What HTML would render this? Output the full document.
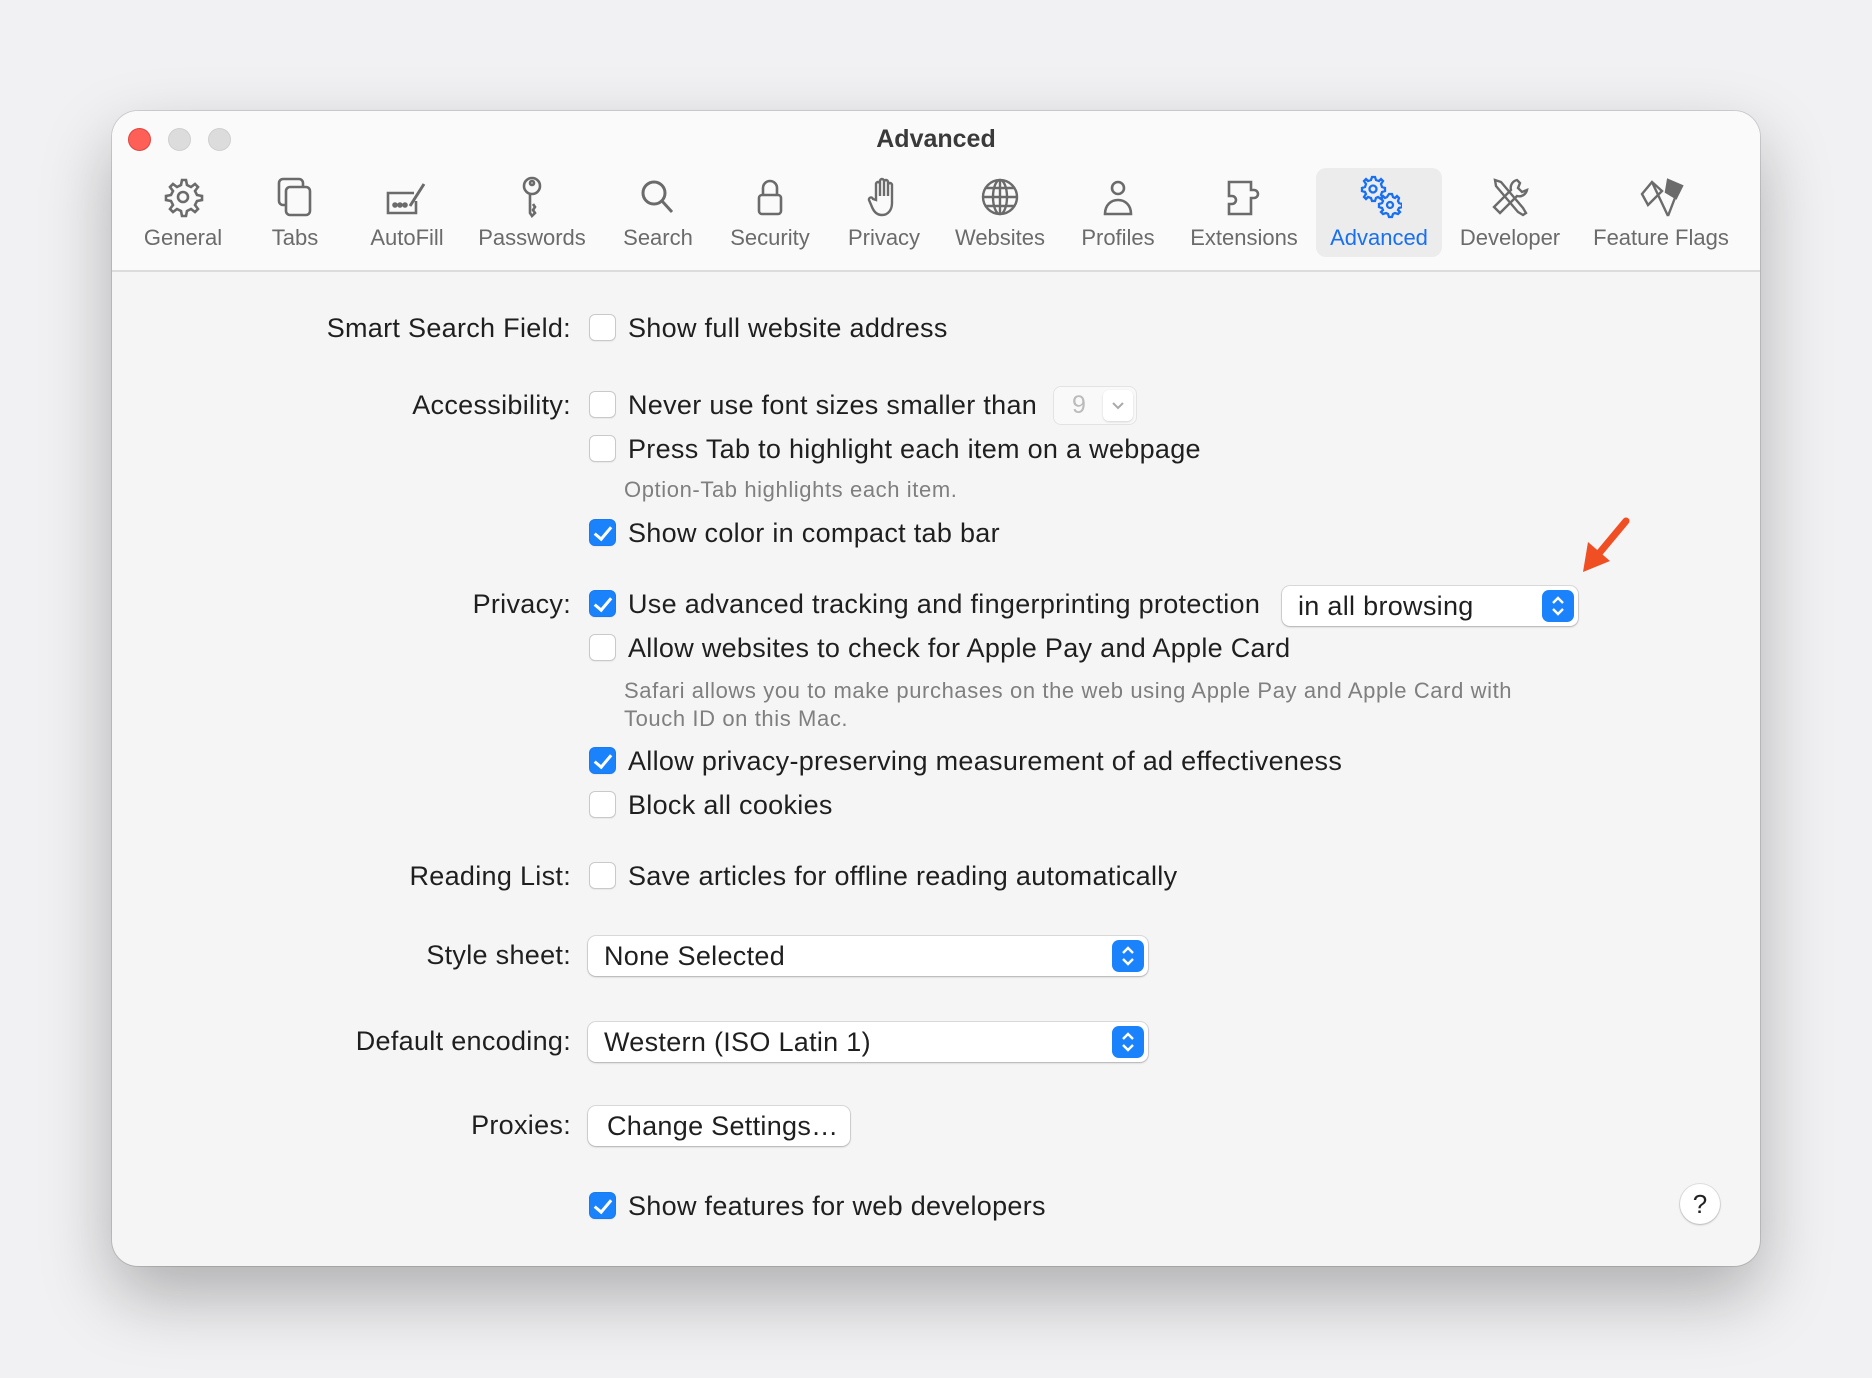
<!DOCTYPE html>
<html><head><meta charset="utf-8"><style>
*{box-sizing:border-box;margin:0;padding:0}
body{width:1872px;height:1378px;background:#f1f1f3;font-family:"Liberation Sans",sans-serif;position:relative;overflow:hidden}
.win{position:absolute;left:112px;top:111px;width:1648px;height:1155px;border-radius:26px;background:#f5f5f5;box-shadow:0 30px 70px rgba(0,0,0,.28),0 0 0 1px rgba(0,0,0,.12);overflow:hidden}
.tb{position:absolute;left:0;top:0;width:100%;height:161px;background:#fafafa;border-bottom:2px solid #dcdcdc}
.tl{position:absolute;top:17px;width:23px;height:23px;border-radius:50%;background:#dcdcdc;border:1px solid #cfcfcf}
.title{position:absolute;top:14px;left:0;width:100%;text-align:center;font-weight:bold;font-size:25px;color:#3a3a3a}
.tab{position:absolute;top:63px;width:130px;margin-left:-65px;text-align:center;color:#6b6b6b;font-size:22px;white-space:nowrap}
.tab svg{display:block;margin:0 auto 5px;width:46px;height:46px}
.tab span{display:block;line-height:26px}
.sel{position:absolute;left:1204px;top:57px;width:126px;height:89px;background:#ececec;border-radius:10px}
.t{position:absolute;font-size:27px;letter-spacing:.3px;color:#1f1f1f;line-height:40px;white-space:nowrap}
.lbl{right:1189px;text-align:right}
.note{position:absolute;font-size:22px;letter-spacing:.6px;color:#7f7f7f;line-height:28px;left:512px;white-space:nowrap}
.cb{position:absolute;left:477px;width:27px;height:27px;border-radius:6px;background:#fff;border:1px solid #c9c9c9;box-shadow:0 1px 1px rgba(0,0,0,.05)}
.cb.on{background:#1a82fb;border-color:#1a7af0}
.cb.on:after{content:"";position:absolute;left:8px;top:3px;width:7px;height:14px;border:solid #fff;border-width:0 3.5px 3.5px 0;transform:rotate(40deg)}
.pop{position:absolute;background:#fff;border-radius:8px;box-shadow:0 0 0 1px rgba(0,0,0,.1),0 1px 2px rgba(0,0,0,.2);font-size:27px;letter-spacing:.3px;color:#1f1f1f;line-height:40px;padding-left:16px;white-space:nowrap}
.arr{position:absolute;right:4px;top:4px;width:32px;height:32px;border-radius:7px;background:#1a82fb}
</style></head><body>
<div class="win">
<div class="tb">
<div class="tl" style="left:16px;background:#fe5f57;border-color:#e0443e"></div>
<div class="tl" style="left:56px"></div>
<div class="tl" style="left:96px"></div>
<div class="title">Advanced</div>
<div class="sel"></div>
<div class="tab" style="left:71px"><svg viewBox="0 0 46 46" fill="none" stroke="#6b6b6b" stroke-width="2.6"><path d="M23 6l3 0 1 5 4 2 4-3 3 3-3 4 2 4 5 1v4l-5 1-2 4 3 4-3 3-4-3-4 2-1 5h-4l-1-5-4-2-4 3-3-3 3-4-2-4-5-1v-4l5-1 2-4-3-4 3-3 4 3 4-2 1-5z"/><circle cx="23" cy="23" r="5"/></svg><span>General</span></div>
<div class="tab" style="left:183px"><svg viewBox="0 0 46 46" fill="none" stroke="#6b6b6b" stroke-width="2.6"><rect x="7" y="5" width="24" height="26" rx="4"/><rect x="14" y="13" width="24" height="28" rx="4" fill="#fafafa"/></svg><span>Tabs</span></div>
<div class="tab" style="left:295px"><svg viewBox="0 0 46 46" fill="none" stroke="#6b6b6b" stroke-width="2.6"><path d="M30 19H4v20h28V27"/><path d="M26 32l14-22" stroke-width="3"/><circle cx="11" cy="31" r="1.5" fill="#6b6b6b"/><circle cx="16" cy="31" r="1.5" fill="#6b6b6b"/><circle cx="21" cy="31" r="1.5" fill="#6b6b6b"/></svg><span>AutoFill</span></div>
<div class="tab" style="left:420px"><svg viewBox="0 0 46 46" fill="none" stroke="#6b6b6b" stroke-width="2.6"><circle cx="23" cy="12" r="8"/><circle cx="23" cy="9" r="2"/><path d="M21 20v19l2 3 3-3-2-3 2-3-2-3"/></svg><span>Passwords</span></div>
<div class="tab" style="left:546px"><svg viewBox="0 0 46 46" fill="none" stroke="#6b6b6b" stroke-width="3"><circle cx="19" cy="19" r="11"/><path d="M27 27l10 11"/></svg><span>Search</span></div>
<div class="tab" style="left:658px"><svg viewBox="0 0 46 46" fill="none" stroke="#6b6b6b" stroke-width="2.6"><rect x="12" y="21" width="22" height="19" rx="3"/><path d="M16 21v-7a7 7 0 0 1 14 0v7"/></svg><span>Security</span></div>
<div class="tab" style="left:772px"><svg viewBox="0 0 46 46" fill="none" stroke="#6b6b6b" stroke-width="2.4"><path d="M15 26V10a2 2 0 0 1 4 0v12V7a2 2 0 0 1 4 0v15V8a2 2 0 0 1 4 0v14V11a2 2 0 0 1 4 0v18c0 7-4 12-10 12-5 0-8-3-10-8l-3-7a2 2 0 0 1 4-1z"/></svg><span>Privacy</span></div>
<div class="tab" style="left:888px"><svg viewBox="0 0 46 46" fill="none" stroke="#6b6b6b" stroke-width="2.4"><circle cx="23" cy="23" r="17"/><ellipse cx="23" cy="23" rx="7" ry="17"/><path d="M6 23h34M9 14h28M9 32h28M23 6v34"/></svg><span>Websites</span></div>
<div class="tab" style="left:1006px"><svg viewBox="0 0 46 46" fill="none" stroke="#6b6b6b" stroke-width="2.6"><circle cx="23" cy="14" r="6"/><path d="M10 40c0-9 6-14 13-14s13 5 13 14z"/></svg><span>Profiles</span></div>
<div class="tab" style="left:1132px"><svg viewBox="0 0 46 46" fill="none" stroke="#6b6b6b" stroke-width="2.6"><path d="M8 8h22v8h3a4 4 0 0 1 0 8h-3v16H8V30h3a4 4 0 0 0 0-8H8z"/></svg><span>Extensions</span></div>
<div class="tab" style="left:1267px;color:#1870f0"><svg viewBox="0 0 46 46" fill="none" stroke="#1870f0" stroke-width="2.3"><path d="M16 3h3l1 3 3 1 2-2 2 2-2 3 1 3 3 1v3l-3 1-1 3 2 2-2 2-3-2-2 1-1 3h-3l-1-3-3-1-2 2-2-2 2-3-1-2-3-1v-3l3-1 1-3-2-3 2-2 2 2 3-1z"/><circle cx="17" cy="15" r="3.5"/><path d="M33 20h3l1 3 2 1 2-2 2 2-1 3 1 2 3 1v3l-3 1-1 2 2 2-2 2-3-1-2 1-1 3h-3l-1-3-2-1-3 1-2-2 2-2-1-2-3-1v-3l3-1 1-2-2-3 2-2 2 2 2-1z"/><circle cx="34" cy="31" r="3"/></svg><span>Advanced</span></div>
<div class="tab" style="left:1398px"><svg viewBox="0 0 46 46" fill="none" stroke="#6b6b6b" stroke-width="2.4"><path d="M8 6l6 2 22 26 3 5-3 2-5-3L9 12z"/><path d="M30 6a8 8 0 0 0-6 10L7 33l6 6 17-17a8 8 0 0 0 10-6l-5 2-4-4 2-5z"/></svg><span>Developer</span></div>
<div class="tab" style="left:1549px;width:150px;margin-left:-75px"><svg viewBox="0 0 46 46" fill="none" stroke="#6b6b6b" stroke-width="2.4" style="width:60px"><path d="M4 20l10-12 10 9-8 8-6 6z"/><path d="M14 8l16 34M30 42l10-26"/><path d="M30 6l14 6-6 12-10-6z" fill="#6b6b6b"/></svg><span>Feature Flags</span></div>
</div>

<div class="t lbl" style="top:197px">Smart Search Field:</div>
<div class="cb" style="top:203px"></div><div class="t" style="left:516px;top:197px">Show full website address</div>

<div class="t lbl" style="top:274px">Accessibility:</div>
<div class="cb" style="top:280px"></div><div class="t" style="left:516px;top:274px">Never use font sizes smaller than</div>
<div style="position:absolute;left:942px;top:276px;width:82px;height:37px;border-radius:7px;background:#f9f9f9;box-shadow:0 0 0 1px rgba(0,0,0,.07)"><span style="position:absolute;left:18px;top:4px;font-size:25px;color:#bbb">9</span><span style="position:absolute;right:3px;top:3px;width:30px;height:31px;background:#fff;border-radius:6px;box-shadow:0 1px 2px rgba(0,0,0,.15)"><svg width="30" height="31" viewBox="0 0 30 31"><path d="M10 13l5 5 5-5" fill="none" stroke="#aaa" stroke-width="2"/></svg></span></div>
<div class="cb" style="top:324px"></div><div class="t" style="left:516px;top:318px">Press Tab to highlight each item on a webpage</div>
<div class="note" style="top:365px">Option-Tab highlights each item.</div>
<div class="cb on" style="top:408px"></div><div class="t" style="left:516px;top:402px">Show color in compact tab bar</div>

<div class="t lbl" style="top:473px">Privacy:</div>
<div class="cb on" style="top:479px"></div><div class="t" style="left:516px;top:473px">Use advanced tracking and fingerprinting protection</div>
<div class="pop" style="left:1170px;top:475px;width:296px;height:40px">in all browsing<div class="arr"><svg width="32" height="32" viewBox="0 0 32 32" fill="none" stroke="#fff" stroke-width="2.4"><path d="M11 13l5-5 5 5M11 19l5 5 5-5"/></svg></div></div>
<div class="cb" style="top:523px"></div><div class="t" style="left:516px;top:517px">Allow websites to check for Apple Pay and Apple Card</div>
<div class="note" style="top:566px">Safari allows you to make purchases on the web using Apple Pay and Apple Card with<br>Touch ID on this Mac.</div>
<div class="cb on" style="top:636px"></div><div class="t" style="left:516px;top:630px">Allow privacy-preserving measurement of ad effectiveness</div>
<div class="cb" style="top:680px"></div><div class="t" style="left:516px;top:674px">Block all cookies</div>

<div class="t lbl" style="top:745px">Reading List:</div>
<div class="cb" style="top:751px"></div><div class="t" style="left:516px;top:745px">Save articles for offline reading automatically</div>

<div class="t lbl" style="top:824px">Style sheet:</div>
<div class="pop" style="left:476px;top:825px;width:560px;height:40px">None Selected<div class="arr"><svg width="32" height="32" viewBox="0 0 32 32" fill="none" stroke="#fff" stroke-width="2.4"><path d="M11 13l5-5 5 5M11 19l5 5 5-5"/></svg></div></div>

<div class="t lbl" style="top:910px">Default encoding:</div>
<div class="pop" style="left:476px;top:911px;width:560px;height:40px">Western (ISO Latin 1)<div class="arr"><svg width="32" height="32" viewBox="0 0 32 32" fill="none" stroke="#fff" stroke-width="2.4"><path d="M11 13l5-5 5 5M11 19l5 5 5-5"/></svg></div></div>

<div class="t lbl" style="top:994px">Proxies:</div>
<div class="pop" style="left:476px;top:995px;width:262px;height:40px;padding-left:19px">Change Settings…</div>

<div class="cb on" style="top:1081px"></div><div class="t" style="left:516px;top:1075px">Show features for web developers</div>

<div style="position:absolute;left:1568px;top:1073px;width:40px;height:40px;border-radius:50%;background:#fff;box-shadow:0 0 0 1px rgba(0,0,0,.08),0 1px 2px rgba(0,0,0,.2);text-align:center;line-height:40px;font-size:26px;color:#222">?</div>
</div>
<svg style="position:absolute;left:0;top:0" width="1872" height="1378"><path d="M1626 521L1596 557" stroke="#f04e23" stroke-width="7" stroke-linecap="round"/><path d="M1583 572l5-30 22 19z" fill="#f04e23"/></svg>
</body></html>
